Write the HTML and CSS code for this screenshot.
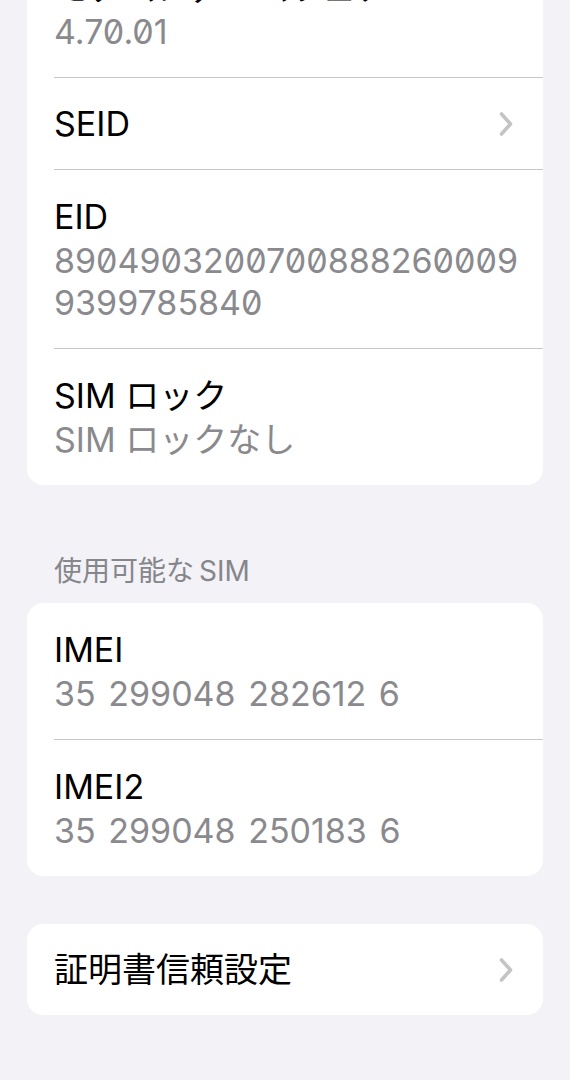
FILE: index.html
```html
<!DOCTYPE html>
<html lang="ja">
<head>
  <meta charset="UTF-8">
  <title>情報</title>
  <link rel="stylesheet" href="styles.css">
</head>
<body>

  <div class="page">

    <div class="card card-top">
      <div class="row">
        <div class="label"><span class="jp">モデムファームウェア</span></div>
        <div class="value mono">4.70.01</div>
      </div>
      <div class="row row-link">
        <div class="label">SEID</div>
        <svg class="chevron" viewBox="0 0 16 26" width="16" height="26">
          <path d="M3.5 3 L12.5 13 L3.5 23" />
        </svg>
      </div>
      <div class="row">
        <div class="label">EID</div>
        <div class="value mono">8904903200700888260009<br>9399785840</div>
      </div>
      <div class="row">
        <div class="label">SIM <span class="jp">ロック</span></div>
        <div class="value">SIM <span class="jp">ロックなし</span></div>
      </div>
    </div>

    <div class="section-title"><span class="jp">使用可能な</span>SIM</div>

    <div class="card">
      <div class="row">
        <div class="label">IMEI</div>
        <div class="value spaced">35 299048 282612 6</div>
      </div>
      <div class="row">
        <div class="label">IMEI2</div>
        <div class="value spaced">35 299048 250183 6</div>
      </div>
    </div>

    <div class="card card-gap">
      <div class="row row-link">
        <div class="label"><span class="jp">証明書信頼設定</span></div>
        <svg class="chevron" viewBox="0 0 16 26" width="16" height="26">
          <path d="M3.5 3 L12.5 13 L3.5 23" />
        </svg>
      </div>
    </div>

  </div>

</body>
</html>
```

FILE: styles.css
```css
body {
  margin: 0;
  background-color: #f2f2f7;
  font-family: 'Inter', 'Noto Sans CJK JP', sans-serif;
  color: #000;
}

.page {
  padding: 0 27px 60px;
}

.jp {
  line-height: 1;
}

.card {
  background: #fff;
  border-radius: 16px;
  overflow: hidden;
}

.card-top {
  margin-top: -59px;
  border-top-left-radius: 0;
  border-top-right-radius: 0;
}

.card-gap {
  margin-top: 48px;
}

.row {
  margin-left: 27px;
  padding: 24px 27px 24px 0;
  font-size: 34px;
}

.row + .row {
  border-top: 1px solid #c6c6c8;
}

.label {
  line-height: 46px;
}

.value {
  line-height: 42px;
  color: #8a8a8e;
}

.mono {
  font-feature-settings: "zero" 1;
}

.spaced {
  word-spacing: 3px;
}

.row-link {
  display: flex;
  align-items: center;
  justify-content: space-between;
  padding-right: 29px;
}

.row-link .label {
  line-height: 43px;
}

.chevron {
  flex-shrink: 0;
  fill: none;
  stroke: #c4c4c7;
  stroke-width: 3.6;
  stroke-linecap: round;
  stroke-linejoin: round;
}

.section-title {
  padding: 68px 27px 14px;
  font-size: 28px;
  line-height: 36px;
  color: #86868b;
}

.section-title .jp {
  margin-right: 5px;
}
```
